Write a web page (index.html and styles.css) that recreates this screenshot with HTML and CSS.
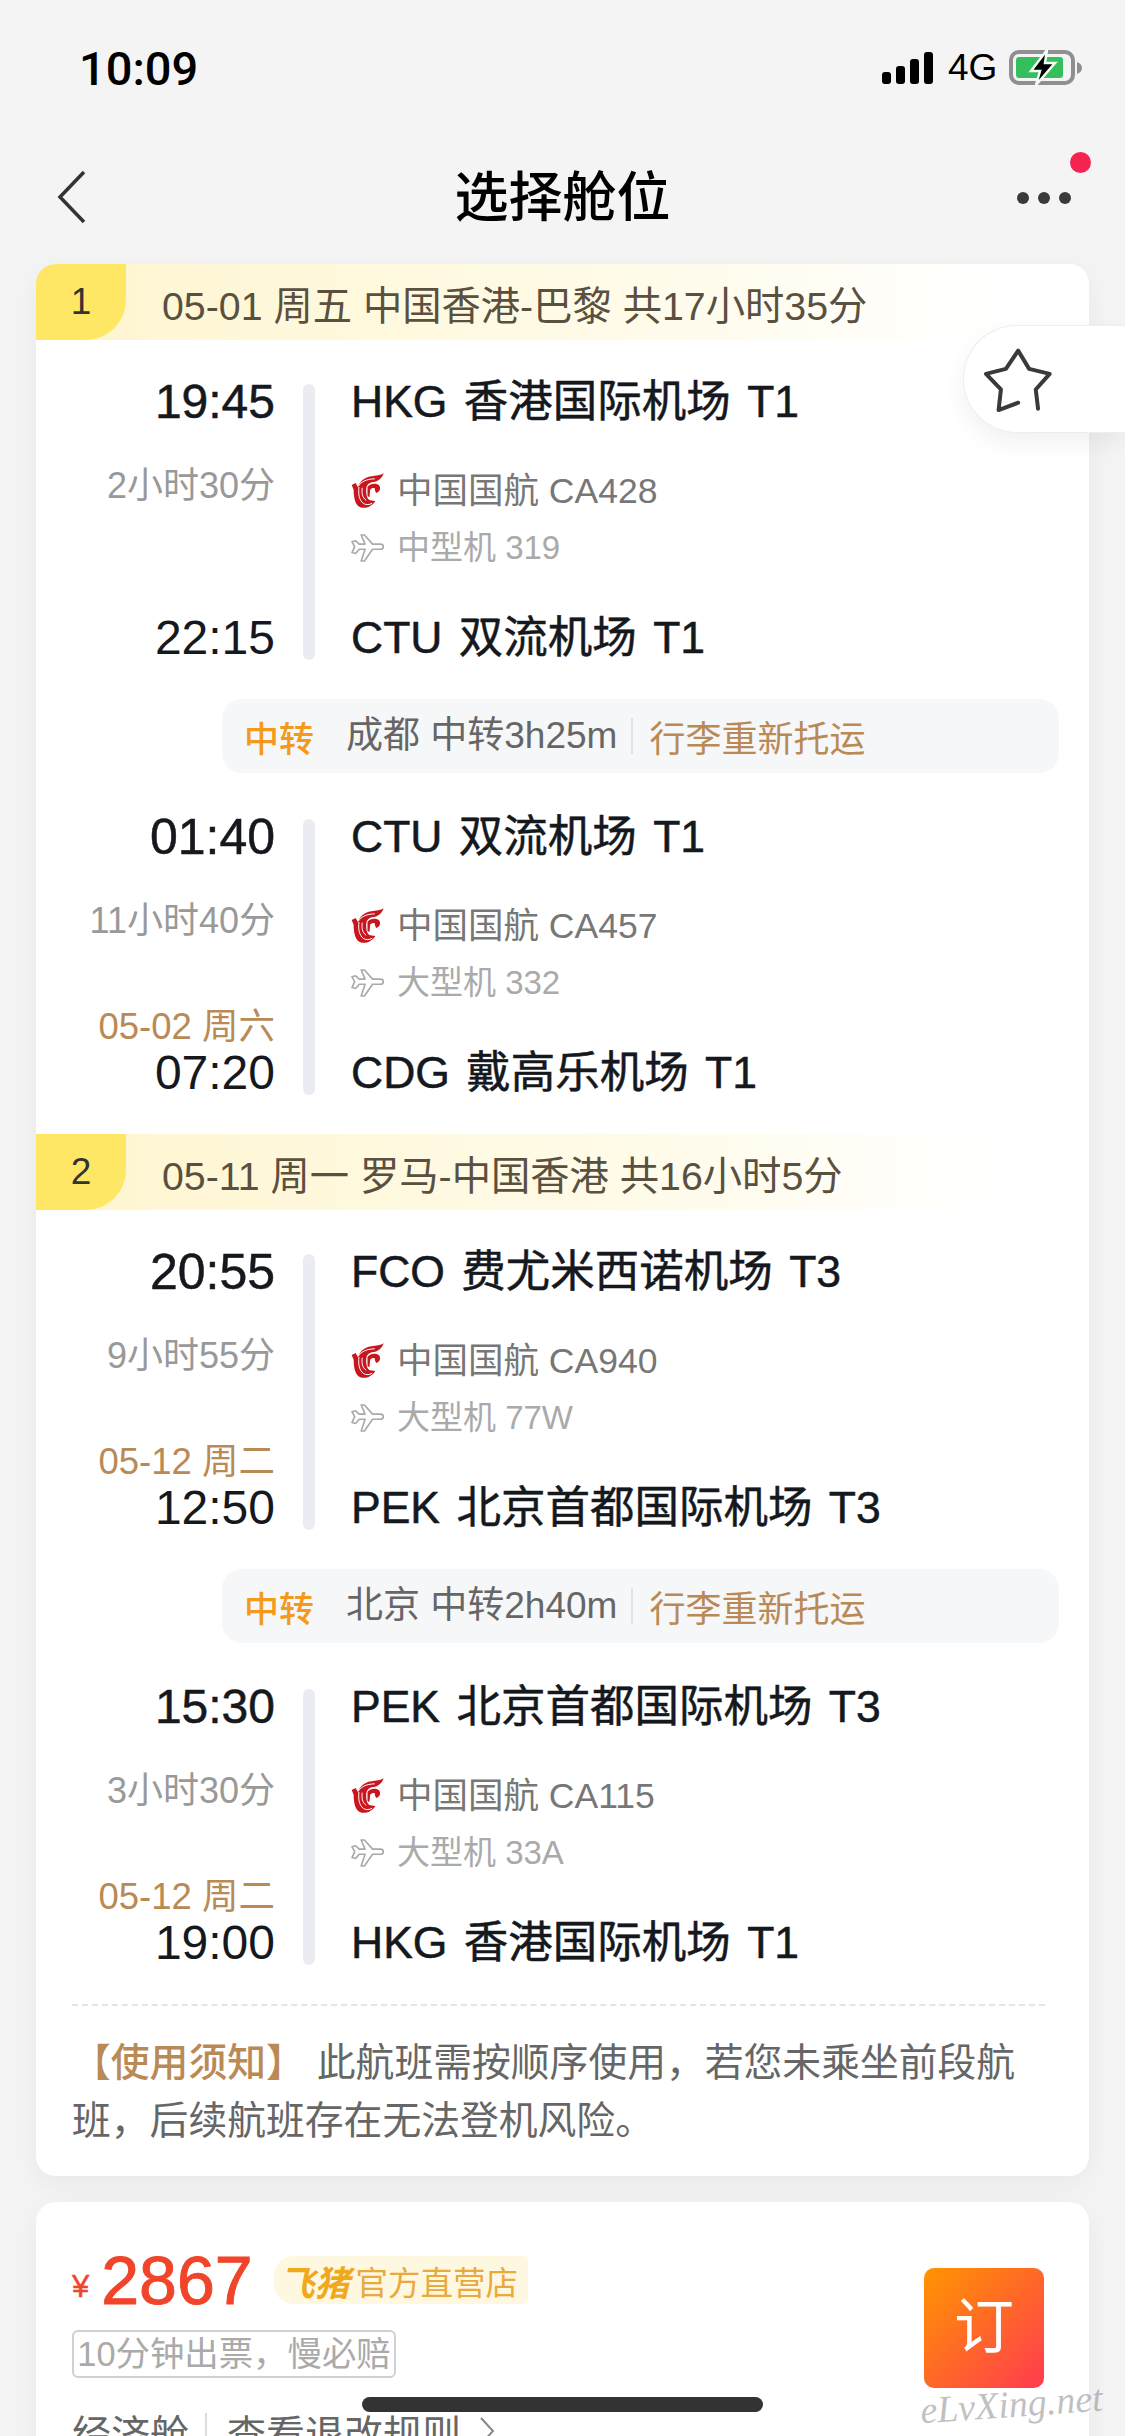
FILE: index.html
```html
<!DOCTYPE html>
<html lang="zh-CN">
<head>
  <meta charset="UTF-8" />
  <title>选择舱位</title>
  <link rel="stylesheet" href="styles.css">
</head>
<body>
  <svg class="defs" width="0" height="0">
    <symbol id="airchina" viewBox="0 0 100 108">
      <path fill="#c8161e" d="M2 36 L14 30 L21 42 C25 28 38 12 62 9 C76 7 90 7 99 0 C95 13 84 24 68 27 C54 29 47 36 46 50 C46 66 48 78 58 82 L74 84 C64 100 46 108 30 104 C12 98 8 72 8 50 Z"/>
      <path fill="#c8161e" d="M50 42 C58 31 74 29 84 36 C92 44 88 58 76 60 L72 50 C76 44 64 42 58 50 L56 72 L50 70 Z"/>
      <path fill="none" stroke="#fff" stroke-width="3" d="M24 42 C22 62 24 82 38 92 C46 97 56 96 64 91 M34 44 C32 60 34 74 46 82 M22 40 C30 26 46 18 72 17"/>
    </symbol>
    <symbol id="plane" viewBox="0 0 104 86">
      <path fill="none" stroke="#a9a9a9" stroke-width="5" stroke-linejoin="round" d="M3 24 L14 21 L25 31 L43 31 L31 3 L41 3 L66 31 L90 31 C102 31 102 47 90 47 L66 47 L41 83 L31 83 L43 47 L25 47 L14 60 L3 57 L11 39 Z"/>
    </symbol>
  </svg>

  <div class="status">
    <span class="clock">10:09</span>
    <div class="status-right">
      <div class="signal"><i class="b1"></i><i class="b2"></i><i class="b3"></i><i class="b4"></i></div>
      <span class="net">4G</span>
      <svg class="battery" width="73" height="36" viewBox="0 0 73 36">
        <rect x="2" y="2" width="62" height="31" rx="8" fill="none" stroke="#8f8f8f" stroke-width="4"/>
        <rect x="7" y="7" width="47" height="21" rx="3" fill="#35bf5c"/>
        <path d="M68 12 C71 13 73 15 73 18 C73 21 71 23 68 24 Z" fill="#8f8f8f"/>
        <path d="M38 0 L22 21 L31 21 L27 35 L46 13 L36 13 Z" fill="#000" stroke="#f0fff4" stroke-width="2.5"/>
      </svg>
    </div>
  </div>

  <div class="nav">
    <svg class="back" width="30" height="54" viewBox="0 0 30 54"><path d="M27 2 L3 27 L27 52" fill="none" stroke="#333" stroke-width="3.5"/></svg>
    <span class="title">选择舱位</span>
    <div class="more"><i></i><i></i><i></i></div>
    <span class="red-dot"></span>
  </div>

  <div class="fav">
    <svg width="73" height="67" viewBox="150 135 220 200"><path d="M262 305 L203 327 L210 265 L165 218 L225 203 L262 148 L295 203 L357 218 L315 265 L322 323" fill="none" stroke="#3a3a3a" stroke-width="12" stroke-linecap="round" stroke-linejoin="round"/></svg>
  </div>

  <div class="card">
    <div class="trip-head"><span class="num">1</span><span class="trip-text">05-01 周五 中国香港-巴黎 共17小时35分</span></div>
    <div class="trip">
      <div class="seg">
        <div class="times">
          <div class="time">19:45</div>
          <div class="dur">2小时30分</div>
          <div class="arr">22:15</div>
        </div>
        <div class="bar"></div>
        <div class="info">
          <div class="airport">HKG 香港国际机场 T1</div>
          <div class="airline"><svg width="33" height="36"><use href="#airchina"/></svg>中国国航 CA428</div>
          <div class="model"><svg width="34" height="28"><use href="#plane"/></svg>中型机 319</div>
          <div class="airport end">CTU 双流机场 T1</div>
        </div>
      </div>
      <div class="transfer"><b>中转</b><span class="city">成都 中转3h25m</span><span class="recheck">行李重新托运</span></div>
      <div class="seg">
        <div class="times">
          <div class="time wide">01:40</div>
          <div class="dur">11小时40分</div>
          <div class="day">05-02 周六</div>
          <div class="arr next">07:20</div>
        </div>
        <div class="bar"></div>
        <div class="info">
          <div class="airport">CTU 双流机场 T1</div>
          <div class="airline"><svg width="33" height="36"><use href="#airchina"/></svg>中国国航 CA457</div>
          <div class="model"><svg width="34" height="28"><use href="#plane"/></svg>大型机 332</div>
          <div class="airport end">CDG 戴高乐机场 T1</div>
        </div>
      </div>
    </div>

    <div class="trip-head"><span class="num">2</span><span class="trip-text">05-11 周一 罗马-中国香港 共16小时5分</span></div>
    <div class="trip">
      <div class="seg">
        <div class="times">
          <div class="time wide">20:55</div>
          <div class="dur">9小时55分</div>
          <div class="day">05-12 周二</div>
          <div class="arr next">12:50</div>
        </div>
        <div class="bar"></div>
        <div class="info">
          <div class="airport">FCO 费尤米西诺机场 T3</div>
          <div class="airline"><svg width="33" height="36"><use href="#airchina"/></svg>中国国航 CA940</div>
          <div class="model"><svg width="34" height="28"><use href="#plane"/></svg>大型机 77W</div>
          <div class="airport end">PEK 北京首都国际机场 T3</div>
        </div>
      </div>
      <div class="transfer"><b>中转</b><span class="city">北京 中转2h40m</span><span class="recheck">行李重新托运</span></div>
      <div class="seg">
        <div class="times">
          <div class="time">15:30</div>
          <div class="dur">3小时30分</div>
          <div class="day">05-12 周二</div>
          <div class="arr next">19:00</div>
        </div>
        <div class="bar"></div>
        <div class="info">
          <div class="airport">PEK 北京首都国际机场 T3</div>
          <div class="airline"><svg width="33" height="36"><use href="#airchina"/></svg>中国国航 CA115</div>
          <div class="model"><svg width="34" height="28"><use href="#plane"/></svg>大型机 33A</div>
          <div class="airport end">HKG 香港国际机场 T1</div>
        </div>
      </div>
    </div>

    <div class="dash"></div>
    <p class="notice"><span>【使用须知】</span>此航班需按顺序使用，若您未乘坐前段航班，后续航班存在无法登机风险。</p>
  </div>

  <div class="card buy">
    <div class="buy-left">
      <div class="price-row">
        <span class="yen">¥</span><span class="price">2867</span>
        <span class="shop"><b>飞猪</b>官方直营店</span>
      </div>
      <div class="tag">10分钟出票，慢必赔</div>
      <div class="cabin"><span>经济舱</span><i></i><span class="rules">查看退改规则</span><svg width="16" height="30" viewBox="0 0 16 30"><path d="M2 2 L14 15 L2 28" fill="none" stroke="#888" stroke-width="2"/></svg></div>
    </div>
    <div class="book">订</div>
  </div>

  <div class="home-bar"></div>
  <div class="watermark">eLvXing.net</div>
</body>
</html>
```

FILE: styles.css
```css
html, body {
  margin: 0;
  height: 2436px;
  overflow: hidden;
}
body {
  position: relative;
  background: #f4f4f5;
  font-family: 'Liberation Sans', 'Noto Sans CJK SC', sans-serif;
  color: #15181d;
}
.defs {
  position: absolute;
}

/* status bar */
.status {
  height: 136px;
  box-sizing: border-box;
  padding: 0 43px 0 79px;
  display: flex;
  align-items: center;
  justify-content: space-between;
}
.clock {
  font-family: Roboto, sans-serif;
  font-weight: 500;
  font-size: 47px;
  color: #000;
}
.status-right {
  display: flex;
  align-items: center;
}
.signal {
  display: flex;
  align-items: flex-end;
  gap: 5px;
  height: 32px;
  margin-right: 15px;
}
.signal i {
  width: 9px;
  background: #000;
  border-radius: 3px;
}
.b1 { height: 12px; }
.b2 { height: 18px; }
.b3 { height: 25px; }
.b4 { height: 32px; }
.net {
  font-size: 37px;
  color: #000;
  width: 61px;
}

/* nav */
.nav {
  height: 122px;
  margin-bottom: 6px;
  position: relative;
  display: flex;
  align-items: center;
  justify-content: center;
}
.back {
  position: absolute;
  left: 57px;
  top: 34px;
}
.title {
  font-size: 54px;
  font-weight: 500;
  color: #000;
  line-height: 64px;
  padding-top: 2px;
}
.more {
  position: absolute;
  left: 1017px;
  top: 56px;
  display: flex;
  gap: 9px;
}
.more i {
  width: 12px;
  height: 12px;
  border-radius: 50%;
  background: #3a3a3a;
}
.red-dot {
  position: absolute;
  left: 1070px;
  top: 16px;
  width: 21px;
  height: 21px;
  border-radius: 50%;
  background: #f5234f;
}
.fav {
  position: absolute;
  left: 963px;
  top: 325px;
  width: 162px;
  height: 108px;
  box-sizing: border-box;
  padding-left: 17px;
  display: flex;
  align-items: center;
  background: #fff;
  border: 1px solid #eeeef0;
  border-right: none;
  border-radius: 54px 0 0 54px;
  box-shadow: 0 10px 24px rgba(0, 0, 0, 0.06);
}

/* cards */
.card {
  margin: 0 36px;
  background: #fff;
  border-radius: 20px;
  overflow: hidden;
  box-shadow: 0 8px 30px rgba(0, 0, 0, 0.05);
}
.trip-head {
  height: 76px;
  display: flex;
  align-items: center;
  background: linear-gradient(90deg, #fef5cf 0%, #fffbe8 55%, #ffffff 92%);
}
.num {
  width: 90px;
  height: 76px;
  line-height: 76px;
  text-align: center;
  background: #ffe766;
  border-bottom-right-radius: 40px;
  font-size: 37px;
  color: #333;
}
.trip-text {
  margin-left: 36px;
  font-size: 39.3px;
  color: #5a5040;
}
.trip {
  padding: 44px 0 39px;
}
.seg {
  height: 276px;
  display: flex;
}
.times {
  width: 239px;
  display: flex;
  flex-direction: column;
  align-items: flex-end;
}
.time {
  font-size: 48px;
  line-height: 36px;
  -webkit-text-stroke: 0.5px #15181d;
}
.time.wide {
  font-size: 50px;
}
.dur {
  margin-top: 46px;
  font-size: 36px;
  line-height: 40px;
  color: #999;
}
.arr {
  margin-top: auto;
  font-size: 48px;
  line-height: 44px;
}
.day {
  margin-top: auto;
  margin-bottom: 4px;
  font-size: 36.5px;
  line-height: 40px;
  color: #b98a56;
}
.arr.next {
  margin-top: 0;
}
.bar {
  width: 12px;
  margin: 0 36px 0 28px;
  background: #ebecf1;
  border-radius: 6px;
}
.info {
  flex: 1;
  display: flex;
  flex-direction: column;
}
.airport {
  font-size: 44.5px;
  line-height: 36px;
  white-space: nowrap;
  word-spacing: 4px;
  -webkit-text-stroke: 0.5px #15181d;
}
.airport.end {
  margin-top: auto;
  line-height: 44px;
}
.airline, .model {
  display: flex;
  align-items: center;
  gap: 13px;
}
.airline {
  margin-top: 51px;
  font-size: 35.5px;
  line-height: 40px;
  color: #777;
}
.model {
  margin-top: 19px;
  gap: 12px;
  font-size: 33px;
  line-height: 36px;
  color: #aaa;
}
.transfer {
  margin: 39px 30px 46px 186px;
  height: 74px;
  padding-left: 22px;
  display: flex;
  align-items: center;
  background: #f6f7f9;
  border-radius: 20px;
}
.transfer b {
  width: 102px;
  font-weight: 500;
  font-size: 35px;
  color: #f39a1d;
}
.city {
  font-size: 37px;
  color: #666;
  padding-right: 14px;
  border-right: 2px solid #e2e3e6;
  line-height: 36px;
}
.recheck {
  margin-left: 16px;
  font-size: 36px;
  color: #b98a56;
}
.dash {
  margin: 0 44px 0 36px;
  border-top: 2px dashed #e4e4e4;
}
.trip:last-of-type {
  padding-bottom: 38px;
}
.notice {
  margin: 0;
  padding: 28px 36px 26px;
  font-size: 38.8px;
  line-height: 58px;
  color: #666;
}
.notice span {
  margin-right: 12px;
  font-weight: 500;
  color: #b98a56;
}

/* price card */
.buy {
  margin-top: 26px;
  height: 300px;
  padding: 50px 45px 0 36px;
  display: flex;
  justify-content: space-between;
  align-items: flex-start;
}
.price-row {
  height: 56px;
  display: flex;
  align-items: center;
}
.yen {
  font-size: 31px;
  color: #f0452a;
  margin: 14px 12px 0 0;
  -webkit-text-stroke: 0.5px #f0452a;
}
.price {
  font-size: 68px;
  color: #f0452a;
  -webkit-text-stroke: 1px #f0452a;
}
.shop {
  margin-left: 21px;
  height: 48px;
  padding: 0 10px 0 6px;
  display: flex;
  align-items: center;
  background: #fff8e1;
  border-radius: 20px 4px 4px 20px;
  font-size: 32.5px;
  color: #e9a93d;
}
.shop b {
  width: 76px;
  font-style: italic;
  font-size: 35px;
  color: #f0a81e;
}
.tag {
  margin-top: 22px;
  width: 324px;
  height: 48px;
  box-sizing: border-box;
  border: 2px solid #d0d0d0;
  border-radius: 6px;
  font-size: 34.4px;
  line-height: 44px;
  text-align: center;
  white-space: nowrap;
  color: #aaa;
}
.cabin {
  margin-top: 25px;
  display: flex;
  align-items: center;
  font-size: 39px;
  color: #666;
}
.cabin i {
  width: 2px;
  height: 36px;
  margin: 0 20px 0 16px;
  background: #ddd;
}
.rules {
  font-size: 39px;
  margin-right: 18px;
}
.book {
  margin-top: 16px;
  width: 120px;
  height: 120px;
  border-radius: 10px;
  background: linear-gradient(135deg, #ff9500, #ff3b50);
  color: #fff;
  font-size: 60px;
  line-height: 120px;
  text-align: center;
}

/* overlays */
.home-bar {
  position: absolute;
  left: 362px;
  top: 2397px;
  width: 401px;
  height: 15px;
  border-radius: 8px;
  background: #333;
}
.watermark {
  position: absolute;
  left: 920px;
  top: 2382px;
  font-family: 'Liberation Serif', serif;
  font-style: italic;
  font-size: 38px;
  color: rgba(130, 130, 130, 0.5);
  white-space: nowrap;
  transform: rotate(-4deg);
}
```
